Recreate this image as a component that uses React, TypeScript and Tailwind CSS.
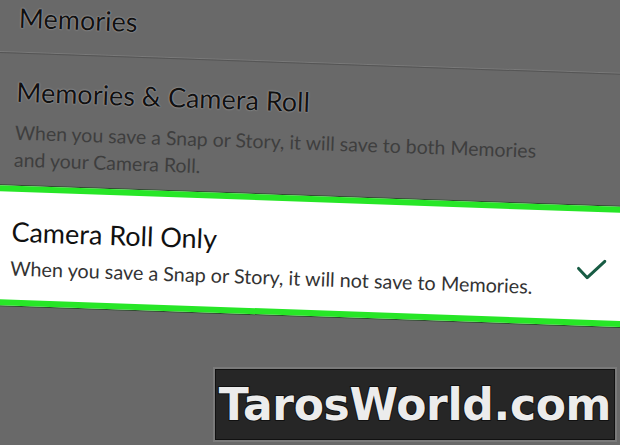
export default function App() {
  return (
    <div className="relative w-[620px] h-[445px] overflow-hidden bg-[#696969] font-['Lato','Noto_Sans',sans-serif]">
      {/* settings list, photographed at a slight tilt */}
      <div className="w-[680px] h-[445px] -ml-[30px] rotate-2 origin-center">
        <div className="px-[42px] pt-[12px] text-[27px] leading-8 text-[#111] [text-shadow:0_0_1.5px_#d4d4d4]">
          Memories
        </div>
        <div className="mt-[19px] h-px bg-[#555] shadow-[0_-1px_0_#7a7a7a]" />

        <div className="px-[42px] mt-[22px]">
          <div className="text-[27px] leading-8 text-[#111] [text-shadow:0_0_1.5px_#d4d4d4]">
            Memories &amp; Camera Roll
          </div>
          <p className="mt-[11px] w-[530px] text-[19.5px] leading-[27px] text-[#3e3e3e]">
            When you save a Snap or Story, it will save to both Memories and your Camera Roll.
          </p>
        </div>

        {/* selected option */}
        <div className="mt-[13px] bg-white border-y-[6px] border-[#27e627] shadow-[0_-1px_0_#2d4d2d,0_1px_0_#2d4d2d] flex items-center justify-between px-[42px] pt-[23px] pb-[18px]">
          <div>
            <div className="text-[27px] leading-[34px] text-[#111]">Camera Roll Only</div>
            <p className="mt-[5px] text-[19.8px] leading-7 text-[#333]">
              When you save a Snap or Story, it will not save to Memories.
            </p>
          </div>
          <svg width="30" height="22" viewBox="0 0 30 22" fill="none">
            <path d="M2 11 L11 20 L28 3" stroke="#185c44" strokeWidth="3" strokeLinecap="round" strokeLinejoin="round" />
          </svg>
        </div>
      </div>

      {/* watermark */}
      <div className="absolute left-[213px] top-[367px] w-[404px] h-[75px] bg-[#262626] border-2 border-[#7a7a7a] outline outline-1 outline-[#111] -outline-offset-3 flex items-center justify-center">
        <span className="font-['DejaVu_Sans',sans-serif] font-bold text-[44px] leading-none text-[#ececec] [-webkit-text-stroke:2px_#111] [paint-order:stroke_fill] tracking-[-0.3px]">
          TarosWorld.com
        </span>
      </div>
    </div>
  );
}
